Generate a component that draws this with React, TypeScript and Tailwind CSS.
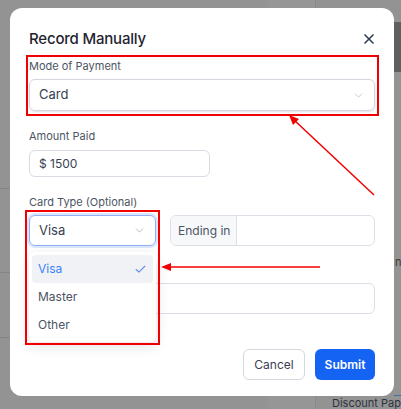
import { ChevronDown, Check, X } from "lucide-react";

const FONT = { fontFamily: "Inter, 'Noto Sans', sans-serif" };

export default function App() {
  return (
    <div className="relative h-[409px] w-[401px] overflow-hidden bg-[#939393]" style={FONT}>
      {/* page behind the overlay */}
      <div className="absolute left-[268px] top-0 h-[409px] w-[47px] bg-[#969696]" />
      <div className="absolute left-[315px] top-0 h-[409px] w-px bg-[#8a8a8a]" />
      <div className="absolute left-0 top-[188px] h-px w-[10px] bg-[#858585]" />
      <div className="absolute left-0 top-[272px] h-px w-[10px] bg-[#858585]" />
      <div className="absolute left-0 top-[337px] h-px w-[10px] bg-[#858585]" />
      <div className="absolute left-[394px] top-[44px] h-px w-[7px] bg-[#6b6b6b]" />
      <div className="absolute left-[394px] top-[22px] h-[50px] w-[7px] bg-[#5f5f5f]" />
      <div className="absolute left-[394px] top-[395px] h-px w-[7px] bg-[#3e6fa8]" />
      <div className="absolute left-[395px] top-[255px] text-[11px] leading-[14px] text-[#3a3a3a]">ns</div>
      <div className="absolute left-[332px] top-[396px] whitespace-nowrap text-[11px] leading-[14px] text-[#2f3340]">
        Discount Paper l
      </div>

      {/* modal */}
      <div className="relative ml-[10px] mt-2 h-[388px] w-[384px] rounded-xl bg-white px-[19px] pt-[20px]">
        <div className="flex items-center justify-between">
          <h2 className="text-[15px] leading-[22px] font-medium tracking-[-0.2px] text-[#1f2430]">Record Manually</h2>
          <X className="mr-[-2px] h-[16px] w-[16px] text-[#334155]" strokeWidth={2.5} />
        </div>

        <div className="mt-[8px] text-[11px] leading-[16px] text-[#4b5563]">Mode of Payment</div>
        <div className="mt-[5px] flex h-[32px] items-center justify-between rounded-md border border-[#d4d7de] px-[9px] shadow-sm">
          <span className="text-[13px] text-[#374151]">Card</span>
          <ChevronDown className="h-[13px] w-[13px] text-[#b8bcc6]" strokeWidth={1.5} />
        </div>

        <div className="mt-[17px] text-[11px] leading-[16px] text-[#4b5563]">Amount Paid</div>
        <div className="mt-[6px] flex h-[27px] w-[181px] items-center rounded-md border border-[#d8dbe2] px-[9px]">
          <span className="text-[12px] text-[#374151]">$ 1500</span>
        </div>

        <div className="mt-[17px] text-[11px] leading-[16px] text-[#4b5563]">Card Type (Optional)</div>
        <div className="mt-[5px] flex gap-[14px]">
          <div className="flex h-[31px] w-[127px] items-center justify-between rounded-md border border-[#8fb0f5] px-[9px] shadow-[0_0_0_2px_#dbe6fd]">
            <span className="text-[13px] text-[#374151]">Visa</span>
            <ChevronDown className="h-[13px] w-[13px] text-[#a8adb8]" strokeWidth={1.5} />
          </div>
          <div className="flex h-[31px] flex-1 overflow-hidden rounded-md border border-[#dcdfe6]">
            <div className="flex w-[66px] items-center border-r border-[#dcdfe6] bg-[#f7f8fa] pl-[7px] text-[12px] text-[#4b5563]">
              Ending in
            </div>
            <div className="flex-1" />
          </div>
        </div>

        {/* label of this field is hidden under the open menu */}
        <div className="mt-[16px] h-[16px]" />
        <div className="mt-[5px] h-[31px] rounded-md border border-[#dcdfe6]" />

        <div className="mt-[35px] flex justify-end gap-[10px]">
          <button className="h-[31px] w-[62px] rounded-md border border-[#d4d7de] bg-white text-[12px] text-[#374151]">
            Cancel
          </button>
          <button className="h-[31px] w-[60px] rounded-md bg-[#1463f3] text-[12px] font-semibold text-white">
            Submit
          </button>
        </div>

        {/* open dropdown */}
        <div className="absolute left-[19px] top-[244px] w-[127px] rounded-md bg-white p-[3px] shadow-[0_4px_14px_rgba(0,0,0,0.12)]">
          <div className="flex h-[28px] items-center justify-between rounded bg-[#f1f2f6] px-[6px]">
            <span className="text-[12px] text-[#3b82f6]">Visa</span>
            <Check className="h-[13px] w-[13px] text-[#5b8ff0]" strokeWidth={2} />
          </div>
          <div className="flex h-[28px] items-center px-[6px] text-[12px] text-[#4b5563]">Master</div>
          <div className="flex h-[28px] items-center px-[6px] text-[12px] text-[#4b5563]">Other</div>
        </div>
      </div>

      {/* annotations */}
      <div className="absolute left-[26px] top-[55px] h-[61px] w-[353px] border-2 border-[#f00000]" />
      <div className="absolute left-[25px] top-[210px] h-[135px] w-[135px] border-2 border-[#f00000]" />
      <svg className="absolute left-0 top-0" width="401" height="409">
        <line x1="374" y1="195" x2="293" y2="119" stroke="#f00000" strokeWidth="1.5" />
        <polygon points="289,115 299,119 293,125" fill="#f00000" />
        <line x1="320" y1="267" x2="168" y2="267" stroke="#f00000" strokeWidth="1.5" />
        <polygon points="161,267 171,263 171,271" fill="#f00000" />
      </svg>
    </div>
  );
}
